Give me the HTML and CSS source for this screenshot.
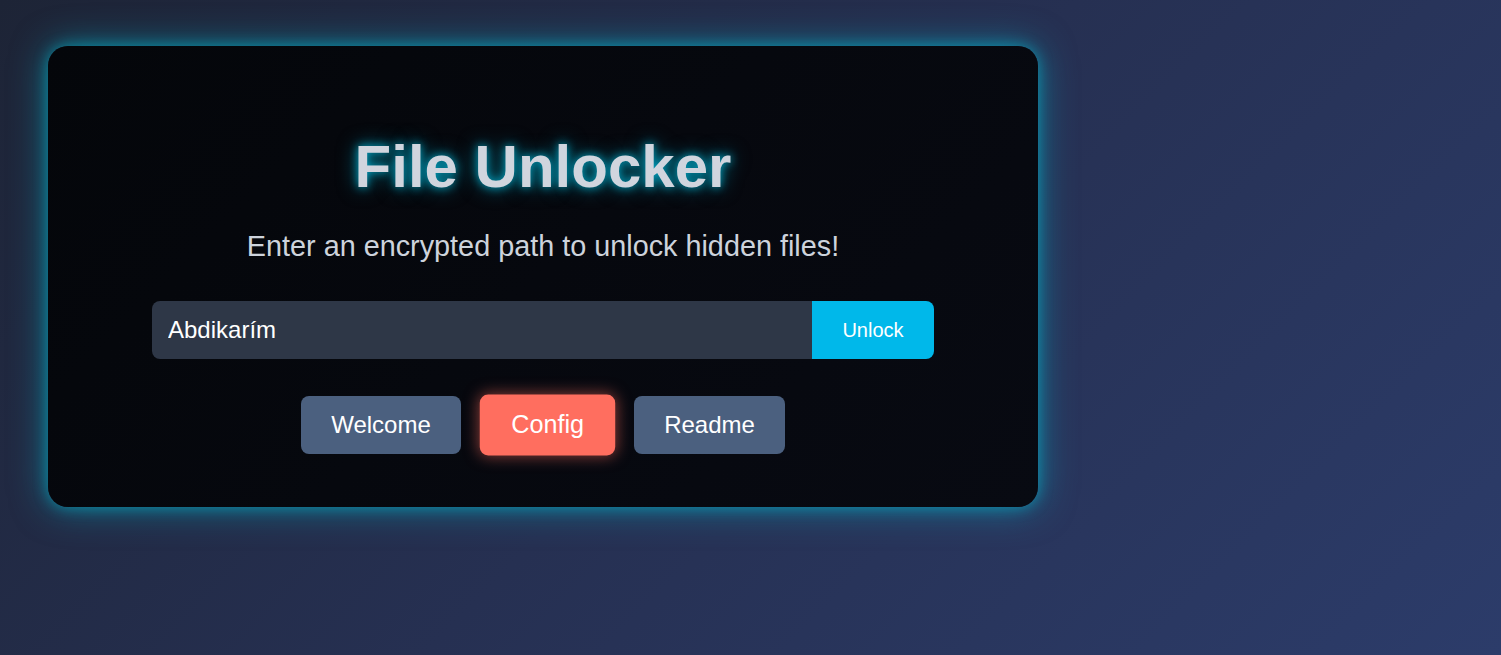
FILE: index.html
```html
<!DOCTYPE html>
<html lang="en">
	<head>
		<meta charset="UTF-8">
		<title>File Unlocker</title>
		<link rel="stylesheet" href="styles.css">
	</head>
	<body>
		<div id="box">
			<h1 id="title">File Unlocker</h1>
			<p id="tip">Enter an encrypted path to unlock hidden files!</p>
			<div id="form">
				<input type="text" id="path" value="Abdikarím">
				<button id="unlock">Unlock</button>
			</div>
			<div id="files">
				<button class="file">Welcome</button>
				<button class="file active">Config</button>
				<button class="file">Readme</button>
			</div>
		</div>
	</body>
</html>
```

FILE: styles.css
```css
* {
	margin: 0;
	padding: 0;
	box-sizing: border-box;
}

html,
body {
	height: 100%;
}

body {
	background: linear-gradient(135deg, #1d2436 0%, #263052 50%, #2c3c6a 100%);
	font-family: "Liberation Sans", Arial, sans-serif;
	overflow: hidden;
}

#box {
	margin: 46px 0 0 48px;
	width: 990px;
	padding: 86px 0 53px;
	background: linear-gradient(135deg, #04060a, #080a12);
	border-radius: 20px;
	box-shadow: 0 0 14px rgba(0, 190, 212, 0.5), 0 0 36px rgba(0, 188, 212, 0.55);
	text-align: center;
}

#title {
	font-size: 60px;
	font-weight: bold;
	color: #d0d5de;
	text-shadow: 0 0 10px #00a8c8, 0 0 20px rgba(0, 180, 210, 0.6);
}

#tip {
	margin-top: 29px;
	font-size: 28.8px;
	color: #cdd3dc;
}

#form {
	display: flex;
	justify-content: center;
	margin-top: 38px;
}

#path {
	width: 660px;
	padding: 15px 16px;
	font-family: inherit;
	font-size: 24px;
	color: #fff;
	background-color: #2e3747;
	border: none;
	border-radius: 8px 0 0 8px;
	outline: none;
}

#unlock {
	width: 122px;
	font-family: inherit;
	font-size: 20px;
	color: #fff;
	background-color: #00b8ea;
	border: none;
	border-radius: 0 8px 8px 0;
}

#files {
	display: flex;
	justify-content: center;
	gap: 22px;
	margin-top: 37px;
}

.file {
	padding: 15px 30px;
	font-family: inherit;
	font-size: 24px;
	color: #fff;
	background-color: #4b607f;
	border: none;
	border-radius: 8px;
}

.file.active {
	background-color: #ff6e5f;
	transform: scale(1.05);
	box-shadow: 0 0 14px rgba(255, 110, 95, 0.55);
}
```
